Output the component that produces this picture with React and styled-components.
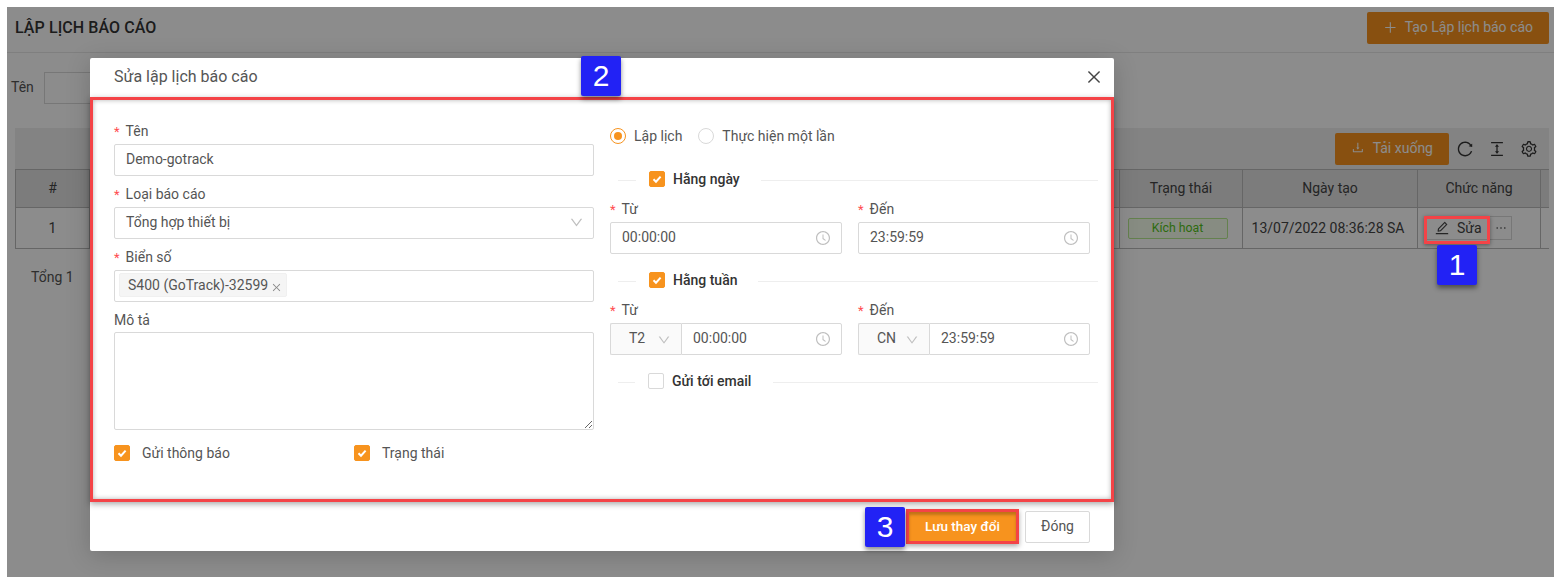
import React from 'react';
import styled, { createGlobalStyle } from 'styled-components';
import {
  AiOutlineClockCircle,
  AiOutlineClose,
  AiOutlineColumnHeight,
  AiOutlineDown,
  AiOutlineDownload,
  AiOutlineEdit,
  AiOutlineEllipsis,
  AiOutlinePlus,
  AiOutlineReload,
  AiOutlineSetting,
} from 'react-icons/ai';

const ORANGE = '#f7931e';
const MARK_RED = '#f44347';

const GlobalStyle = createGlobalStyle`
  html, body {
    margin: 0;
    padding: 0;
    background: #fff;
  }
  * {
    box-sizing: border-box;
  }
  body {
    font-family: Roboto, "Noto Sans", sans-serif;
    font-size: 14px;
    color: #555;
  }
`;

const Frame = styled.div`
  width: 1559px;
  height: 586px;
  padding: 7px 5px 9px 7px;
  overflow: hidden;
`;

const Screen = styled.div`
  position: relative;
  height: 100%;
  background: #fff;
  overflow: hidden;
`;

const PageHead = styled.div`
  height: 46px;
  padding: 5px 5px 0 8px;
  border-bottom: 1px solid #e8e8e8;
  display: flex;
  justify-content: space-between;
  align-items: flex-start;
`;

const PageTitle = styled.h1`
  margin: 0;
  font-size: 16px;
  line-height: 32px;
  font-weight: 500;
  color: #333;
  letter-spacing: 0.08px;
`;

const PrimaryButton = styled.div`
  height: 32px;
  padding: 0 16px 2px;
  display: flex;
  align-items: center;
  gap: 8px;
  background: ${ORANGE};
  color: #fff;
  border-radius: 2px;
  font-size: 14px;
  white-space: nowrap;
  svg {
    font-size: 15px;
  }
`;

const CreateButton = styled(PrimaryButton)`
  width: 182px;
  gap: 7px;
`;

const FilterRow = styled.div`
  margin-top: 19px;
  padding: 0 0 2px 4px;
  height: 32px;
  display: flex;
  align-items: center;
  gap: 10px;
`;

const FilterInput = styled.div`
  width: 220px;
  height: 32px;
  flex: none;
  margin-bottom: -2px;
  border: 1px solid #d9d9d9;
`;

const TableArea = styled.section`
  margin: 24px 5px 0 8px;
`;

const Toolbar = styled.div`
  height: 41px;
  background: #eee;
  display: flex;
  justify-content: flex-end;
  align-items: center;
  gap: 8px;
  padding: 0 8px 0 0;
`;

const ToolIcon = styled.span`
  width: 24px;
  display: flex;
  justify-content: center;
  font-size: 18px;
  color: #333;
`;

const DownloadButton = styled(PrimaryButton)`
  width: 114px;
  justify-content: center;
  margin-right: -4px;
`;

const Table = styled.div`
  display: grid;
  grid-template-columns: 74px 1fr 123px 175px 123px 8px;
  grid-template-rows: 39px 41px;
  border-left: 1px solid #bbb;
`;

const Cell = styled.div`
  display: flex;
  align-items: center;
  justify-content: ${(p) => (p.$left ? 'flex-start' : 'center')};
  padding: ${(p) => (p.$left ? '0 0 0 8px' : p.$head ? '0 0 2px' : '0')};
  background: ${(p) => (p.$head ? '#e2e2e2' : '#fff')};
  border-top: ${(p) => (p.$head ? '1px solid #bbb' : 'none')};
  border-right: ${(p) => (p.$bare ? 'none' : '1px solid #bbb')};
  border-bottom: 1px solid #bbb;
  color: #444;
  white-space: nowrap;
`;

const DateText = styled.span`
  margin-right: 4px;
`;

const StatusTag = styled.span`
  width: 100px;
  height: 21px;
  margin-right: 7px;
  display: flex;
  align-items: center;
  justify-content: center;
  background: #f6ffed;
  border: 1px solid #b7eb8f;
  border-radius: 2px;
  color: #52c41a;
  font-size: 12.3px;
`;

const RowActions = styled.div`
  display: flex;
  align-items: center;
`;

const EditButton = styled.div`
  width: 64px;
  height: 24px;
  padding-left: 7px;
  display: flex;
  align-items: center;
  gap: 7px;
  border: 1px solid #d9d9d9;
  svg {
    font-size: 16px;
  }
`;

const MoreButton = styled.div`
  width: 22px;
  height: 24px;
  display: flex;
  align-items: center;
  justify-content: center;
  border: 1px solid #d9d9d9;
  border-left: none;
  color: #333;
  font-size: 14px;
`;

const Total = styled.div`
  padding: 20px 0 0 16px;
`;

const Overlay = styled.div`
  position: absolute;
  inset: 0;
  padding: 51px 0 0 83px;
  background: rgba(0, 0, 0, 0.45);
`;

const Modal = styled.div`
  width: 1024px;
  height: 493px;
  background: #fff;
  border-radius: 2px;
  box-shadow: 0 4px 24px rgba(0, 0, 0, 0.18);
  display: flex;
  flex-direction: column;
`;

const ModalHead = styled.div`
  height: 39px;
  padding: 0 11px 2px 24px;
  display: flex;
  align-items: center;
  justify-content: space-between;
  font-size: 16px;
  color: #555;
  svg {
    font-size: 18px;
    color: #444;
  }
`;

const ModalBody = styled.div`
  height: 405px;
  padding: 20px 21px 0;
  border: 3px solid ${MARK_RED};
  box-shadow: 0 2px 6px rgba(0, 0, 0, 0.35), inset 0 0 5px rgba(0, 0, 0, 0.3);
  display: grid;
  grid-template-columns: 480px 480px;
  column-gap: 16px;
  align-content: start;
`;

const Column = styled.div`
  display: flex;
  flex-direction: column;
`;

const Field = styled.div`
  margin-bottom: ${(p) => p.$after ?? 7}px;
`;

const Label = styled.label`
  display: block;
  height: 22px;
  line-height: 22px;
  margin-bottom: ${(p) => p.$gap ?? 2}px;
  color: #555;
  &::before {
    content: ${(p) => (p.$required ? '"*"' : 'none')};
    color: #ff4d4f;
    margin-right: 6px;
    font-size: 13px;
  }
`;

const TextInput = styled.input`
  display: block;
  width: 100%;
  height: 32px;
  padding: 0 11px 2px;
  border: 1px solid #d9d9d9;
  border-radius: 2px;
  font: inherit;
  color: #555;
  background: #fff;
  outline: none;
`;

const SelectBox = styled.div`
  height: 32px;
  padding: 0 9px 2px 11px;
  border: 1px solid #d9d9d9;
  border-radius: 2px;
  display: flex;
  align-items: center;
  justify-content: space-between;
  color: #555;
  svg {
    font-size: 15px;
    color: #bfbfbf;
  }
`;

const TagBox = styled.div`
  height: 32px;
  padding: 0 4px 2px;
  border: 1px solid #d9d9d9;
  border-radius: 2px;
  display: flex;
  align-items: center;
`;

const Tag = styled.span`
  height: 24px;
  padding: 0 4px 0 8px;
  display: flex;
  align-items: center;
  gap: 3px;
  background: #f5f5f5;
  border: 1px solid #f0f0f0;
  border-radius: 2px;
  color: #555;
  svg {
    font-size: 11px;
    color: #888;
    margin-top: 4px;
  }
`;

const TextArea = styled.textarea`
  display: block;
  width: 100%;
  height: 98px;
  margin-top: -1px;
  border: 1px solid #d9d9d9;
  border-radius: 2px;
  resize: vertical;
  outline: none;
`;

const CheckRow = styled.div`
  margin-top: 5px;
  display: grid;
  grid-template-columns: 240px 240px;
`;

const CheckLabel = styled.span`
  display: flex;
  align-items: center;
  gap: ${(p) => p.$gap ?? 12}px;
  height: 22px;
  margin-bottom: ${(p) => (p.$strong ? 2 : 0)}px;
  color: ${(p) => (p.$strong ? '#333' : '#555')};
  font-weight: ${(p) => (p.$strong ? 500 : 400)};
`;

const CheckBoxMark = styled.span`
  width: 16px;
  height: 16px;
  flex: none;
  display: flex;
  align-items: center;
  justify-content: center;
  border-radius: 2px;
  background: ${(p) => (p.$on ? ORANGE : '#fff')};
  border: 1px solid ${(p) => (p.$on ? ORANGE : '#d9d9d9')};
`;

const Check = ({ on = true }) => (
  <CheckBoxMark $on={on}>
    {on && (
      <svg width="12" height="12" viewBox="0 0 12 12">
        <path d="M2.5 6.2 5 8.7 9.6 3.6" fill="none" stroke="#fff" strokeWidth="2" />
      </svg>
    )}
  </CheckBoxMark>
);

const RadioRow = styled.div`
  height: 22px;
  margin: 5px 0 22px;
  display: flex;
  align-items: center;
`;

const RadioItem = styled.span`
  display: flex;
  align-items: center;
  gap: 8px;
  margin-right: 16px;
`;

const RadioMark = styled.span`
  width: 16px;
  height: 16px;
  border-radius: 50%;
  border: 1px solid ${(p) => (p.$on ? ORANGE : '#d9d9d9')};
  display: flex;
  align-items: center;
  justify-content: center;
  &::after {
    content: '';
    width: 8px;
    height: 8px;
    border-radius: 50%;
    background: ${(p) => (p.$on ? ORANGE : 'transparent')};
  }
`;

const Divider = styled.div`
  height: 22px;
  margin: 0 -8px ${(p) => p.$after ?? 7}px 8px;
  display: flex;
  align-items: center;
  &::before,
  &::after {
    content: '';
    height: 1px;
    background: #eee;
  }
  &::before {
    width: ${(p) => p.$lead ?? 18}px;
    margin-right: 13px;
  }
  &::after {
    flex: 1;
    margin-left: ${(p) => 39 - (p.$lead ?? 18)}px;
  }
`;

const TimeGrid = styled.div`
  display: grid;
  grid-template-columns: 232px 232px;
  column-gap: 16px;
`;

const TimeBox = styled.div`
  height: 32px;
  padding: 0 10px 2px 11px;
  flex: 1;
  border: 1px solid #d9d9d9;
  border-radius: ${(p) => (p.$joined ? '0 2px 2px 0' : '2px')};
  display: flex;
  align-items: center;
  justify-content: space-between;
  color: #555;
  svg {
    font-size: 16px;
    color: #bfbfbf;
    margin-top: 2px;
  }
`;

const JoinedRow = styled.div`
  display: flex;
`;

const DaySelect = styled.div`
  width: 71px;
  height: 32px;
  padding: 0 10px 2px 18px;
  flex: none;
  background: #fafafa;
  border: 1px solid #d9d9d9;
  border-right: none;
  border-radius: 2px 0 0 2px;
  display: flex;
  align-items: center;
  justify-content: space-between;
  color: #555;
  svg {
    font-size: 14px;
    color: #bfbfbf;
    margin-top: 3px;
  }
`;

const ModalFoot = styled.div`
  height: 49px;
  padding: 0 24px 0 0;
  display: flex;
  justify-content: flex-end;
  align-items: center;
  gap: 6px;
`;

const SaveButton = styled.div`
  width: 113px;
  height: 35px;
  padding-bottom: 2px;
  display: flex;
  align-items: center;
  justify-content: center;
  background: ${ORANGE};
  border: 3px solid ${MARK_RED};
  box-shadow: 0 2px 5px rgba(0, 0, 0, 0.35), inset 0 3px 3px rgba(0, 0, 0, 0.22);
  color: #fff;
  font-size: 13.5px;
  font-weight: 500;
`;

const CloseButton = styled.div`
  width: 65px;
  height: 32px;
  padding-bottom: 2px;
  display: flex;
  align-items: center;
  justify-content: center;
  border: 1px solid #d9d9d9;
  border-radius: 2px;
`;

// chú thích đánh số đè lên ảnh chụp
const Badge = styled.div`
  position: absolute;
  left: ${(p) => p.$x}px;
  top: ${(p) => p.$y}px;
  width: 40px;
  height: 40px;
  display: flex;
  align-items: center;
  justify-content: center;
  background: #2222f5;
  border-radius: 2px;
  box-shadow: 0 3px 5px rgba(0, 0, 0, 0.45);
  color: #fff;
  font-family: "Liberation Sans", Arial, sans-serif;
  font-size: 30px;
`;

const MarkBox = styled.div`
  position: absolute;
  left: ${(p) => p.$x}px;
  top: ${(p) => p.$y}px;
  width: 66px;
  height: 28px;
  border: 3px solid ${MARK_RED};
  box-shadow: 0 1px 4px rgba(0, 0, 0, 0.4);
`;

const TimeField = ({ label, value }) => (
  <Field $after={16}>
    <Label $required>{label}</Label>
    <TimeBox>
      {value}
      <AiOutlineClockCircle />
    </TimeBox>
  </Field>
);

const WeekField = ({ label, day, value }) => (
  <Field $after={16}>
    <Label $required>{label}</Label>
    <JoinedRow>
      <DaySelect>
        {day}
        <AiOutlineDown />
      </DaySelect>
      <TimeBox $joined>
        {value}
        <AiOutlineClockCircle />
      </TimeBox>
    </JoinedRow>
  </Field>
);

const App = () => {
  return (
    <Frame>
      <GlobalStyle />
      <Screen>
        <PageHead>
          <PageTitle>LẬP LỊCH BÁO CÁO</PageTitle>
          <CreateButton>
            <AiOutlinePlus />
            Tạo Lập lịch báo cáo
          </CreateButton>
        </PageHead>
        <FilterRow>
          Tên
          <FilterInput />
        </FilterRow>
        <TableArea>
          <Toolbar>
            <DownloadButton>
              <AiOutlineDownload />
              Tải xuống
            </DownloadButton>
            <ToolIcon>
              <AiOutlineReload />
            </ToolIcon>
            <ToolIcon>
              <AiOutlineColumnHeight />
            </ToolIcon>
            <ToolIcon>
              <AiOutlineSetting />
            </ToolIcon>
          </Toolbar>
          <Table>
            <Cell $head>#</Cell>
            <Cell $head />
            <Cell $head>Trạng thái</Cell>
            <Cell $head>Ngày tạo</Cell>
            <Cell $head>Chức năng</Cell>
            <Cell $head $bare />
            <Cell>1</Cell>
            <Cell />
            <Cell>
              <StatusTag>Kích hoạt</StatusTag>
            </Cell>
            <Cell>
              <DateText>13/07/2022 08:36:28 SA</DateText>
            </Cell>
            <Cell $left>
              <RowActions>
                <EditButton>
                  <AiOutlineEdit />
                  Sửa
                </EditButton>
                <MoreButton>
                  <AiOutlineEllipsis />
                </MoreButton>
              </RowActions>
            </Cell>
            <Cell $bare />
          </Table>
          <Total>Tổng 1</Total>
        </TableArea>

        <Overlay>
          <Modal>
            <ModalHead>
              Sửa lập lịch báo cáo
              <AiOutlineClose />
            </ModalHead>
            <ModalBody>
              <Column>
                <Field>
                  <Label $required>Tên</Label>
                  <TextInput readOnly defaultValue="Demo-gotrack" />
                </Field>
                <Field>
                  <Label $required>Loại báo cáo</Label>
                  <SelectBox>
                    Tổng hợp thiết bị
                    <AiOutlineDown />
                  </SelectBox>
                </Field>
                <Field>
                  <Label $required>Biển số</Label>
                  <TagBox>
                    <Tag>
                      S400 (GoTrack)-32599
                      <AiOutlineClose />
                    </Tag>
                  </TagBox>
                </Field>
                <Field>
                  <Label>Mô tả</Label>
                  <TextArea readOnly />
                </Field>
                <CheckRow>
                  <CheckLabel>
                    <Check />
                    Gửi thông báo
                  </CheckLabel>
                  <CheckLabel>
                    <Check />
                    Trạng thái
                  </CheckLabel>
                </CheckRow>
              </Column>
              <Column>
                <RadioRow>
                  <RadioItem>
                    <RadioMark $on />
                    Lập lịch
                  </RadioItem>
                  <RadioItem>
                    <RadioMark />
                    Thực hiện một lần
                  </RadioItem>
                </RadioRow>
                <Divider>
                  <CheckLabel $strong $gap={8}>
                    <Check />
                    Hằng ngày
                  </CheckLabel>
                </Divider>
                <TimeGrid>
                  <TimeField label="Từ" value="00:00:00" />
                  <TimeField label="Đến" value="23:59:59" />
                </TimeGrid>
                <Divider $after={7}>
                  <CheckLabel $strong $gap={8}>
                    <Check />
                    Hằng tuần
                  </CheckLabel>
                </Divider>
                <TimeGrid>
                  <WeekField label="Từ" day="T2" value="00:00:00" />
                  <WeekField label="Đến" day="CN" value="23:59:59" />
                </TimeGrid>
                <Divider $lead={17}>
                  <CheckLabel $strong $gap={8}>
                    <Check on={false} />
                    Gửi tới email
                  </CheckLabel>
                </Divider>
              </Column>
            </ModalBody>
            <ModalFoot>
              <SaveButton>Lưu thay đổi</SaveButton>
              <CloseButton>Đóng</CloseButton>
            </ModalFoot>
          </Modal>
          <MarkBox $x={1417} $y={209} />
          <Badge $x={574} $y={49}>2</Badge>
          <Badge $x={1430} $y={238}>1</Badge>
          <Badge $x={858} $y={500}>3</Badge>
        </Overlay>
      </Screen>
    </Frame>
  );
};

export default App;
